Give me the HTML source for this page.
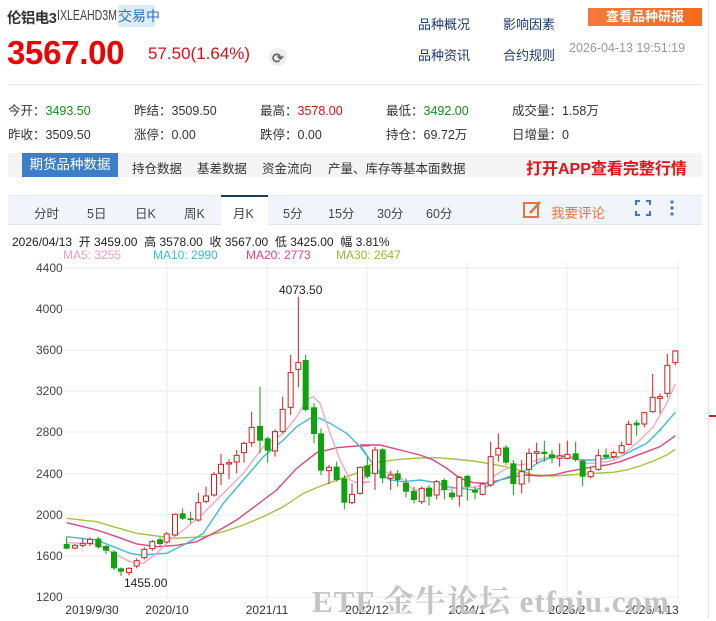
<!DOCTYPE html>
<html><head><meta charset="utf-8"><style>
*{margin:0;padding:0;box-sizing:border-box}
body{width:716px;height:618px;overflow:hidden;background:#fff;font-family:"Liberation Sans","Noto Sans CJK SC",sans-serif;color:#333;position:relative}
.a{position:absolute;white-space:nowrap}
.lk{color:#1a3a6e;font-size:13px}
.st{font-size:12.5px;color:#333}
.g{color:#1a8a1a}.r{color:#d0121b}
.tab{font-size:12.5px;color:#333}
.ct{font-size:12.5px;color:#444}
</style></head><body>
<div class="a" style="left:7px;top:7px;font-size:14.5px;font-weight:bold;color:#333;letter-spacing:-0.6px">伦铝电3</div>
<div class="a" style="left:57px;top:8px;font-size:14.5px;color:#444;transform:scaleX(0.73);transform-origin:0 0">IXLEAHD3M</div>
<div class="a" style="left:118px;top:5px;width:37px;height:22px;background:#d8ecfa;color:#3070b8;font-size:14px;line-height:22px;text-align:center">交易中</div>
<div class="a" style="left:7px;top:34px;font-size:33px;font-weight:bold;color:#e00;letter-spacing:-0.3px">3567.00</div>
<div class="a" style="left:148px;top:44px;font-size:17px;color:#d0121b">57.50(1.64%)</div>
<div class="a" style="left:269px;top:48px;width:18px;height:18px;border-radius:50%;background:#eee"></div>
<div class="a" style="left:272px;top:50px;font-size:14px;color:#666;font-weight:bold">⟳</div>
<div class="a lk" style="left:418px;top:14px">品种概况</div>
<div class="a lk" style="left:503px;top:14px">影响因素</div>
<div class="a lk" style="left:418px;top:45px">品种资讯</div>
<div class="a lk" style="left:503px;top:45px">合约规则</div>
<div class="a" style="left:588px;top:8px;width:114px;height:18px;background:linear-gradient(90deg,#f47a3c,#f86a1c);color:#fff;font-size:13px;font-weight:bold;line-height:18px;text-align:center">查看品种研报</div>
<div class="a" style="left:569px;top:41px;font-size:12.5px;color:#999">2026-04-13 19:51:19</div>
<div class="a" style="left:8px;top:84px;width:694px;height:1px;background:#e8e8e8"></div>
<div class="a" style="left:708px;top:0;width:1px;height:618px;background:#e4e4e4"></div>
<div class="a st" style="left:8px;top:100px">今开：<span class="g">3493.50</span></div>
<div class="a st" style="left:134px;top:100px">昨结：3509.50</div>
<div class="a st" style="left:260px;top:100px">最高：<span class="r">3578.00</span></div>
<div class="a st" style="left:386px;top:100px">最低：<span class="g">3492.00</span></div>
<div class="a st" style="left:512px;top:100px">成交量：1.58万</div>
<div class="a st" style="left:8px;top:124px">昨收：3509.50</div>
<div class="a st" style="left:134px;top:124px">涨停：0.00</div>
<div class="a st" style="left:260px;top:124px">跌停：0.00</div>
<div class="a st" style="left:386px;top:124px">持仓：69.72万</div>
<div class="a st" style="left:512px;top:124px">日增量：0</div>
<div class="a" style="left:8px;top:153px;width:694px;height:24px;background:#f4f4f4"></div>
<div class="a" style="left:22px;top:153px;width:96px;height:24px;background:#3d7ec8;color:#fff;font-size:13.5px;line-height:24px;text-align:center">期货品种数据</div>
<div class="a tab" style="left:132px;top:158px">持仓数据</div>
<div class="a tab" style="left:197px;top:158px">基差数据</div>
<div class="a tab" style="left:262px;top:158px">资金流向</div>
<div class="a tab" style="left:328px;top:158px">产量、库存等基本面数据</div>
<div class="a" style="left:526px;top:155px;font-size:16px;font-weight:bold;color:#e0141c">打开APP查看完整行情</div>
<div class="a" style="left:8px;top:195px;width:694px;height:30px;background:#f1f5fb;border-top:1px solid #e6ebf2;border-bottom:1px solid #dfe6f0"></div>
<div class="a" style="left:221px;top:195px;width:47px;height:31px;background:#fff;border-top:2px solid #1f3a5a"></div>
<div class="a ct" style="left:34px;top:203px">分时</div>
<div class="a ct" style="left:87px;top:203px">5日</div>
<div class="a ct" style="left:135px;top:203px">日K</div>
<div class="a ct" style="left:184px;top:203px">周K</div>
<div class="a ct" style="left:233px;top:203px">月K</div>
<div class="a ct" style="left:283px;top:203px">5分</div>
<div class="a ct" style="left:328px;top:203px">15分</div>
<div class="a ct" style="left:377px;top:203px">30分</div>
<div class="a ct" style="left:426px;top:203px">60分</div>
<svg class="a" style="left:522px;top:200px" width="22" height="20"><rect x="2" y="3" width="14" height="14" fill="none" stroke="#e8743c" stroke-width="2"/><path d="M8 13 L18 2" stroke="#e8743c" stroke-width="2.5"/></svg>
<div class="a" style="left:551px;top:202px;font-size:13.5px;color:#e8743c">我要评论</div>
<svg class="a" style="left:634px;top:199px" width="46" height="20"><path d="M2 6V2H6M12 2H16V6M16 12V16H12M6 16H2V12" fill="none" stroke="#3a78c8" stroke-width="2"/><circle cx="38" cy="3" r="1.6" fill="#3a78c8"/><circle cx="38" cy="9" r="1.6" fill="#3a78c8"/><circle cx="38" cy="15" r="1.6" fill="#3a78c8"/></svg>
<div class="a" style="left:12px;top:233px;font-size:12px;color:#222">2026/04/13&nbsp; 开 3459.00 &nbsp;高 3578.00 &nbsp;收 3567.00 &nbsp;低 3425.00 &nbsp;幅 3.81%</div>
<div class="a" style="left:63px;top:248px;font-size:12px;color:#f0a0bc">MA5: 3255</div>
<div class="a" style="left:153px;top:248px;font-size:12px;color:#3cbcd8">MA10: 2990</div>
<div class="a" style="left:246px;top:248px;font-size:12px;color:#e0457a">MA20: 2773</div>
<div class="a" style="left:336px;top:248px;font-size:12px;color:#98b838">MA30: 2647</div>
<svg id="ch" class="a" style="left:0;top:0" width="716" height="618"></svg>
<div class="a" style="left:312px;top:576px;font-family:'Liberation Serif','Noto Serif CJK SC',serif;font-weight:bold;font-size:31px;color:#c4c4c4;letter-spacing:1px">ETF 金牛论坛 etfniu.com</div>
<script>
var s='';
var hy=[268,309,350,391,432,474,515,556,597],lab=[4400,4000,3600,3200,2800,2400,2000,1600,1200];
for(var i=0;i<9;i++){s+='<line x1="64" x2="678" y1="'+hy[i]+'" y2="'+hy[i]+'" stroke="#ebebeb"/>';s+='<text x="36" y="'+(hy[i]+4)+'" font-size="12" fill="#444" font-family="Liberation Sans">'+lab[i]+'</text>';}
[167,267,367,467,567].forEach(function(x){s+='<line x1="'+x+'" x2="'+x+'" y1="262" y2="600" stroke="#ebebeb"/>';});
s+='<line x1="678" x2="678" y1="262" y2="600" stroke="#ebebeb"/>';
[[92,'2019/9/30'],[167,'2020/10'],[267,'2021/11'],[367,'2022/12'],[467,'2024/1'],[567,'2025/2'],[652,'2026/4/13']].forEach(function(l){s+='<text x="'+l[0]+'" y="614" text-anchor="middle" font-size="12" fill="#333" font-family="Liberation Sans">'+l[1]+'</text>';});
var A=[[110,852,866,'g',830,868],[135,856,864,'r',852,868],[158,850,856,'r',835,862],[180,838,850,'r',832,858],[205,836,862,'g',830,866],[228,858,872,'g',855,882],[252,875,925,'g',870,930],[273,925,935,'g',922,948],[297,925,938,'r',922,946],[320,902,918,'r',895,925],[343,868,893,'r',862,898],[367,845,866,'r',840,872],[390,838,852,'g',832,856],[410,822,846,'r',816,850],[435,763,825,'r',760,828],[458,760,776,'g',745,780],[482,775,780,'g',755,790],[505,728,780,'r',698,785],[528,708,724,'r',680,730],[552,643,705,'r',636,710],[573,613,640,'r',582,675],[597,608,612,'r',598,658],[620,586,606,'r',570,640],[642,550,578,'r',545,608],[665,502,548,'r',455,560],[690,498,542,'g',380,580],[713,535,572,'g',530,608],[735,515,573,'r',508,590],[758,448,514,'r',410,520],[782,338,442,'r',285,465],[805,308,328,'r',110,382],[827,300,450,'g',285,455],[852,442,522,'g',430,550],[873,520,632,'g',505,645],[897,622,632,'r',615,672],[920,620,660,'g',605,665],[943,655,728,'g',645,748],[966,703,728,'r',670,732],[990,622,700,'r',620,704],[1012,616,650,'g',590,655]];
var B=[[45,570,640,'r',560,690],[68,568,655,'g',565,670],[92,645,655,'r',632,690],[113,640,660,'g',630,680],[138,668,695,'g',655,712],[162,693,720,'g',680,730],[185,685,725,'r',680,732],[207,683,710,'g',676,736],[230,665,705,'r',660,718],[253,660,690,'g',655,718],[276,698,712,'g',690,720],[298,652,708,'r',648,740],[322,648,680,'g',645,722],[345,690,698,'g',680,718],[368,672,703,'r',668,706],[392,590,675,'r',545,680],[415,565,585,'r',520,605],[438,562,608,'g',555,615],[460,610,672,'g',600,705],[485,635,672,'r',600,700],[507,580,628,'r',565,668],[530,575,580,'r',548,612],[553,575,582,'g',542,605],[576,583,595,'g',570,610],[599,588,595,'r',550,620],[622,583,595,'r',542,598],[647,580,600,'g',545,605],[668,602,650,'g',598,678],[692,635,650,'r',620,655],[715,587,628,'r',568,632],[738,584,592,'g',565,598],[761,578,590,'r',572,596],[785,557,578,'r',545,582],[806,493,553,'r',482,556],[830,488,496,'g',480,527],[853,458,492,'r',455,502],[878,412,455,'r',342,458],[900,410,415,'r',400,460],[922,316,400,'r',282,412],[946,273,308,'r',270,316]];
function cd(c,ox){var x=ox+c[0]/3,t=260+c[1]/3,b=260+c[2]/3,wt=260+c[4]/3,wb=260+c[5]/3;var col=c[3]=='g'?'#10a010':'#d02020';
s+='<line x1="'+x+'" x2="'+x+'" y1="'+wt+'" y2="'+wb+'" stroke="'+col+'"/>';
if(c[3]=='g')s+='<rect x="'+(x-3)+'" y="'+t+'" width="6" height="'+Math.max(b-t,1.5)+'" fill="'+col+'"/>';
else s+='<rect x="'+(x-2.5)+'" y="'+t+'" width="5" height="'+Math.max(b-t,1)+'" fill="#fff" stroke="'+col+'"/>';}
function pl(a,b,col){var p=a.map(function(q){return (30+q[0]/3)+','+(260+q[1]/3)}).concat(b.map(function(q){return (360+q[0]/3)+','+(260+q[1]/3)}));s+='<polyline points="'+p.join(' ')+'" fill="none" stroke="'+col+'" stroke-width="1.4"/>';}
pl([[110,775],[200,785],[250,800],[320,820],[380,828],[440,835],[520,830],[580,815],[640,795],[700,770],[760,740],[820,700],[880,675],[950,650],[1020,625]],[[0,625],[60,605],[120,598],[180,594],[230,593],[280,597],[340,603],[400,613],[460,625],[520,645],[580,648],[640,644],[700,640],[760,637],[800,630],[840,618],[880,603],[920,585],[946,568]],'#a8c040');
pl([[110,788],[200,810],[260,830],[320,852],[380,860],[440,856],[500,845],[560,815],[620,780],[680,735],[740,690],[800,625],[860,578],[920,563],[980,558],[1020,557]],[[0,555],[60,555],[120,570],[180,585],[220,600],[260,625],[300,655],[340,668],[380,670],[420,660],[460,650],[500,645],[540,648],[580,645],[620,635],[660,628],[700,620],[740,615],[780,605],[820,590],[860,575],[900,560],[946,527]],'#e0457a');
pl([[110,830],[200,840],[250,860],[300,880],[330,885],[410,880],[470,850],[520,820],[580,730],[640,660],[700,590],[760,540],[800,500],[840,475],[870,475],[900,490],[950,520],[990,560],[1020,600]],[[0,555],[30,600],[60,640],[90,660],[130,665],[180,660],[230,668],[260,680],[300,685],[340,690],[380,680],[420,660],[460,645],[500,630],[540,605],[580,590],[620,590],[660,600],[700,600],[740,595],[780,590],[820,570],[860,550],[900,510],[946,457]],'#3cbcd8');
pl([[110,848],[200,852],[250,880],[300,905],[340,910],[380,880],[420,840],[460,810],[520,760],[580,700],[640,640],[700,560],[760,520],[800,470],[830,420],[850,410],[870,430],[900,520],[930,600],[960,660],[990,672],[1020,665]],[[0,665],[30,640],[60,630],[90,640],[120,650],[160,690],[200,690],[240,690],[270,688],[300,682],[340,682],[370,675],[400,650],[430,630],[470,615],[500,612],[530,600],[570,590],[610,585],[640,590],[670,610],[700,610],[740,605],[770,598],[800,575],[840,540],[880,500],[920,430],[946,372]],'#f4a8c0');
A.forEach(function(c){cd(c,30)});B.forEach(function(c){cd(c,360)});
s+='<text x="279" y="294" font-size="12" fill="#222" font-family="Liberation Sans">4073.50</text>';
s+='<text x="124" y="587" font-size="12" fill="#222" font-family="Liberation Sans">1455.00</text>';
s+='<line x1="709" x2="716" y1="416" y2="416" stroke="#d02020" stroke-width="2"/>';
document.getElementById('ch').innerHTML=s;
</script>
</body></html>
